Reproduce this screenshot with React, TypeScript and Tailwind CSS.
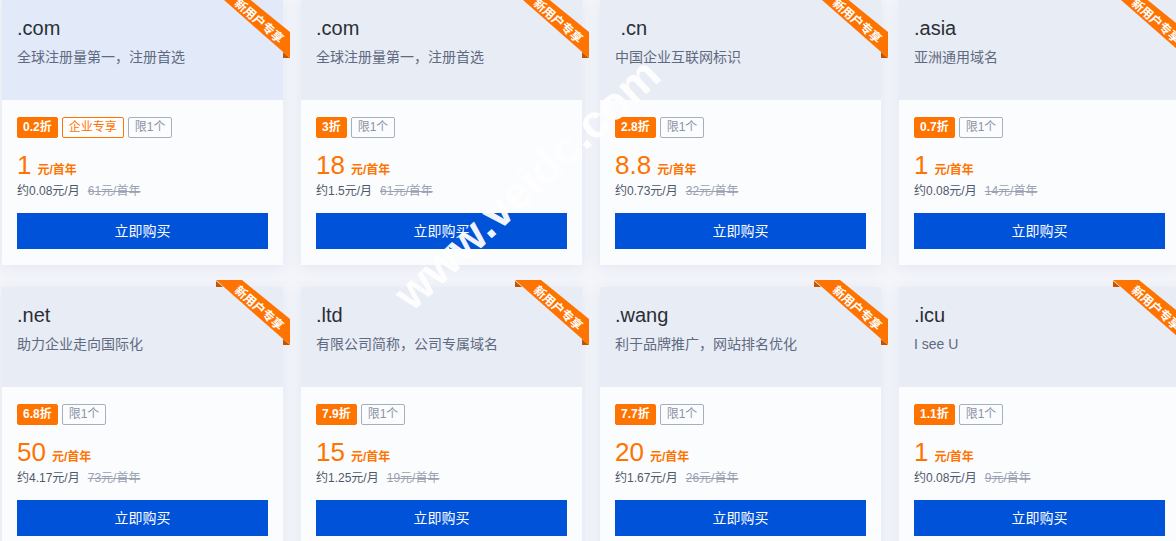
import React from 'react'

type Domain = {
  suffix: string
  desc: string
  discount: string
  enterprise?: boolean
  price: string
  monthly: string
  original: string
  highlight?: boolean
}

const domains: Domain[] = [
  { suffix: '.com', desc: '全球注册量第一，注册首选', discount: '0.2折', enterprise: true, price: '1', monthly: '约0.08元/月', original: '61元/首年', highlight: true },
  { suffix: '.com', desc: '全球注册量第一，注册首选', discount: '3折', price: '18', monthly: '约1.5元/月', original: '61元/首年' },
  { suffix: ' .cn', desc: '中国企业互联网标识', discount: '2.8折', price: '8.8', monthly: '约0.73元/月', original: '32元/首年' },
  { suffix: '.asia', desc: '亚洲通用域名', discount: '0.7折', price: '1', monthly: '约0.08元/月', original: '14元/首年' },
  { suffix: '.net', desc: '助力企业走向国际化', discount: '6.8折', price: '50', monthly: '约4.17元/月', original: '73元/首年' },
  { suffix: '.ltd', desc: '有限公司简称，公司专属域名', discount: '7.9折', price: '15', monthly: '约1.25元/月', original: '19元/首年' },
  { suffix: '.wang', desc: '利于品牌推广，网站排名优化', discount: '7.7折', price: '20', monthly: '约1.67元/月', original: '26元/首年' },
  { suffix: '.icu', desc: 'I see U', discount: '1.1折', price: '1', monthly: '约0.08元/月', original: '9元/首年' },
]

const font = "font-['Liberation_Sans','Noto_Sans_CJK_SC',sans-serif]"

function Ribbon() {
  return (
    <svg className="absolute -top-[7px] -right-[7px] overflow-visible" width="74" height="74" viewBox="0 0 74 74">
      <polygon points="0,1 7,7 0,7" fill="#c45400" />
      <polygon points="67,59 74,65 67,65" fill="#c45400" />
      <polygon points="0,0 26,0 74,39 74,65" fill="#ff7300" />
      <text
        x="44"
        y="27"
        transform="rotate(41 44 27)"
        textAnchor="middle"
        dominantBaseline="central"
        fill="#ffffff"
        fontSize="12"
        fontWeight="700"
        fontFamily="'Noto Sans CJK SC', sans-serif"
      >
        新用户专享
      </text>
    </svg>
  )
}

function DomainCard({ d }: { d: Domain }) {
  return (
    <div className="relative flex flex-col h-[265px] bg-[#fbfcfe] shadow-[0_2px_14px_rgba(40,70,140,0.08)]">
      {/* header */}
      <div className={`h-[100px] px-[15px] pt-[14px] ${d.highlight ? 'bg-[#e2eafa]' : 'bg-[#e8ecf5]'}`}>
        <div className="text-[20px] leading-[28px] text-[#2b2f36] whitespace-pre">{d.suffix}</div>
        <div className="mt-[5px] text-[14px] leading-[20px] text-[#5f6a80]">{d.desc}</div>
      </div>

      {/* body */}
      <div className="flex flex-col px-[15px] pt-[17px]">
        <div className="flex gap-[4px] text-[12px] leading-[19px]">
          <span className="px-[5px] border border-[#ff7300] bg-[#ff7300] text-white font-bold rounded-[2px]">{d.discount}</span>
          {d.enterprise && (
            <span className="px-[6px] border border-[#ff7300] text-[#ff7300] bg-white rounded-[2px]">企业专享</span>
          )}
          <span className="px-[6px] border border-[#a6aec0] text-[#8b93a5] rounded-[2px]">限1个</span>
        </div>

        <div className="mt-[12px] flex items-baseline h-[30px] leading-[30px] text-[#ff7300]">
          <span className="text-[26px]">{d.price}</span>
          <span className="ml-[6px] text-[12px] font-bold">元/首年</span>
        </div>

        <div className="mt-[2px] flex gap-[8px] text-[12px] leading-[18px]">
          <span className="text-[#4e586b]">{d.monthly}</span>
          <span className="text-[#9aa1b0] line-through">{d.original}</span>
        </div>

        <button className="mt-[13px] h-[36px] w-full bg-[#0052d9] text-white text-[14px]">立即购买</button>
      </div>

      <Ribbon />
    </div>
  )
}

export default function App() {
  return (
    <div className={`relative h-[541px] w-[1176px] overflow-hidden bg-[#f3f5fa] ${font}`}>
      <div className="grid grid-cols-[repeat(4,281px)] gap-x-[18px] gap-y-[22px] pl-[2px]">
        {domains.map((d, i) => (
          <DomainCard key={i} d={d} />
        ))}
      </div>

      {/* watermark */}
      <div className="absolute left-[527px] top-[184px] -translate-x-1/2 -translate-y-1/2 -rotate-[43deg] whitespace-nowrap text-[46px] font-bold text-white/95 pointer-events-none">
        www.veidc.com
      </div>
    </div>
  )
}
